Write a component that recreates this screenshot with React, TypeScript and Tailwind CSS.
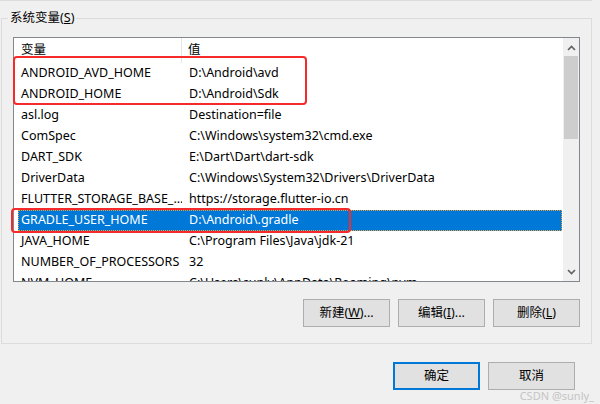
const rows: [string, string][] = [
  ['ANDROID_AVD_HOME', 'D:\\Android\\avd'],
  ['ANDROID_HOME', 'D:\\Android\\Sdk'],
  ['asl.log', 'Destination=file'],
  ['ComSpec', 'C:\\Windows\\system32\\cmd.exe'],
  ['DART_SDK', 'E:\\Dart\\Dart\\dart-sdk'],
  ['DriverData', 'C:\\Windows\\System32\\Drivers\\DriverData'],
  ['FLUTTER_STORAGE_BASE_...', 'https://storage.flutter-io.cn'],
  ['GRADLE_USER_HOME', 'D:\\Android\\.gradle'],
  ['JAVA_HOME', 'C:\\Program Files\\Java\\jdk-21'],
  ['NUMBER_OF_PROCESSORS', '32'],
  ['NVM_HOME', 'C:\\Users\\sunly\\AppData\\Roaming\\nvm'],
]

const SELECTED = 7

function WinButton({ label, primary }: { label: React.ReactNode; primary?: boolean }) {
  return (
    <button
      className={`w-[87px] h-[28px] bg-[#e1e1e1] flex items-center justify-center text-[12.5px] text-black ${
        primary ? 'border-2 border-[#0078d7]' : 'border border-[#adadad]'
      }`}
    >
      {label}
    </button>
  )
}

export default function App() {
  return (
    <div
      className="relative w-[600px] h-[404px] overflow-hidden bg-[#f0f0f0] text-black"
      style={{ fontFamily: '"Noto Sans", "Noto Sans CJK SC", sans-serif' }}
    >
      {/* edge of the group above */}
      <div className="w-[592px] border-t border-[#dcdcdc]" />

      {/* 系统变量 group */}
      <div className="relative mt-[17px] ml-[1px] w-[591px] h-[326px] border border-[#dcdcdc] pt-[18px] pl-[11px]">
        <span className="absolute -top-[10px] left-[6px] px-[2px] bg-[#f0f0f0] text-[12.5px] leading-[18px]">
          系统变量(<span className="underline">S</span>)
        </span>

        {/* list view */}
        <div className="flex w-[567px] h-[245px] border border-[#828790] bg-white">
          <div className="flex-1 flex flex-col overflow-hidden">
            <div className="flex h-[25px] shrink-0 text-[12.5px] items-center">
              <div className="w-[168px] h-full pl-[7px] flex items-center border-r border-[#e5e5e5]">变量</div>
              <div className="pl-[6px]">值</div>
            </div>
            {rows.map(([name, value], i) => (
              <div
                key={name}
                className={`flex h-[21px] shrink-0 items-center text-[12.5px] whitespace-nowrap ${
                  i === SELECTED
                    ? 'bg-[#0078d7] text-white ml-[4px] outline-1 outline-dotted outline-[#f0a030] -outline-offset-1'
                    : ''
                }`}
              >
                <div className={`${i === SELECTED ? 'w-[164px] pl-[3px]' : 'w-[168px] pl-[7px]'} overflow-hidden`}>{name}</div>
                <div className="pl-[7px]">{value}</div>
              </div>
            ))}
          </div>

          {/* scrollbar */}
          <div className="w-[17px] flex flex-col bg-[#f0f0f0] border-l border-white">
            <div className="h-[17px] flex items-center justify-center mt-[1px]">
              <svg width="9" height="6" viewBox="0 0 9 6">
                <path d="M1 5 L4.5 1.5 L8 5" fill="none" stroke="#606060" strokeWidth="1.6" />
              </svg>
            </div>
            <div className="h-[83px] mx-[1px] bg-[#cdcdcd]" />
            <div className="flex-1" />
            <div className="h-[17px] flex items-center justify-center mb-[1px]">
              <svg width="9" height="6" viewBox="0 0 9 6">
                <path d="M1 1 L4.5 4.5 L8 1" fill="none" stroke="#606060" strokeWidth="1.6" />
              </svg>
            </div>
          </div>
        </div>

        <div className="flex justify-end gap-[8px] w-[567px] mt-[17px]">
          <WinButton label={<>新建(<span className="underline">W</span>)...</>} />
          <WinButton label={<>编辑(<span className="underline">I</span>)...</>} />
          <WinButton label={<>删除(<span className="underline">L</span>)</>} />
        </div>
      </div>

      <div className="flex justify-end gap-[8px] mt-[18px] mr-[25px]">
        <WinButton label="确定" primary />
        <WinButton label="取消" />
      </div>

      {/* annotation boxes */}
      <div className="absolute left-[13px] top-[56px] w-[294px] h-[49px] border-2 border-[#f52a2a] rounded-[4px]" />
      <div className="absolute left-[11px] top-[208px] w-[340px] h-[25px] border-2 border-[#f52a2a] rounded-[4px]" />

      <div className="absolute right-[6px] bottom-[3px] text-[11px] leading-none text-[#c4c4c4]">CSDN @sunly_</div>
    </div>
  )
}
